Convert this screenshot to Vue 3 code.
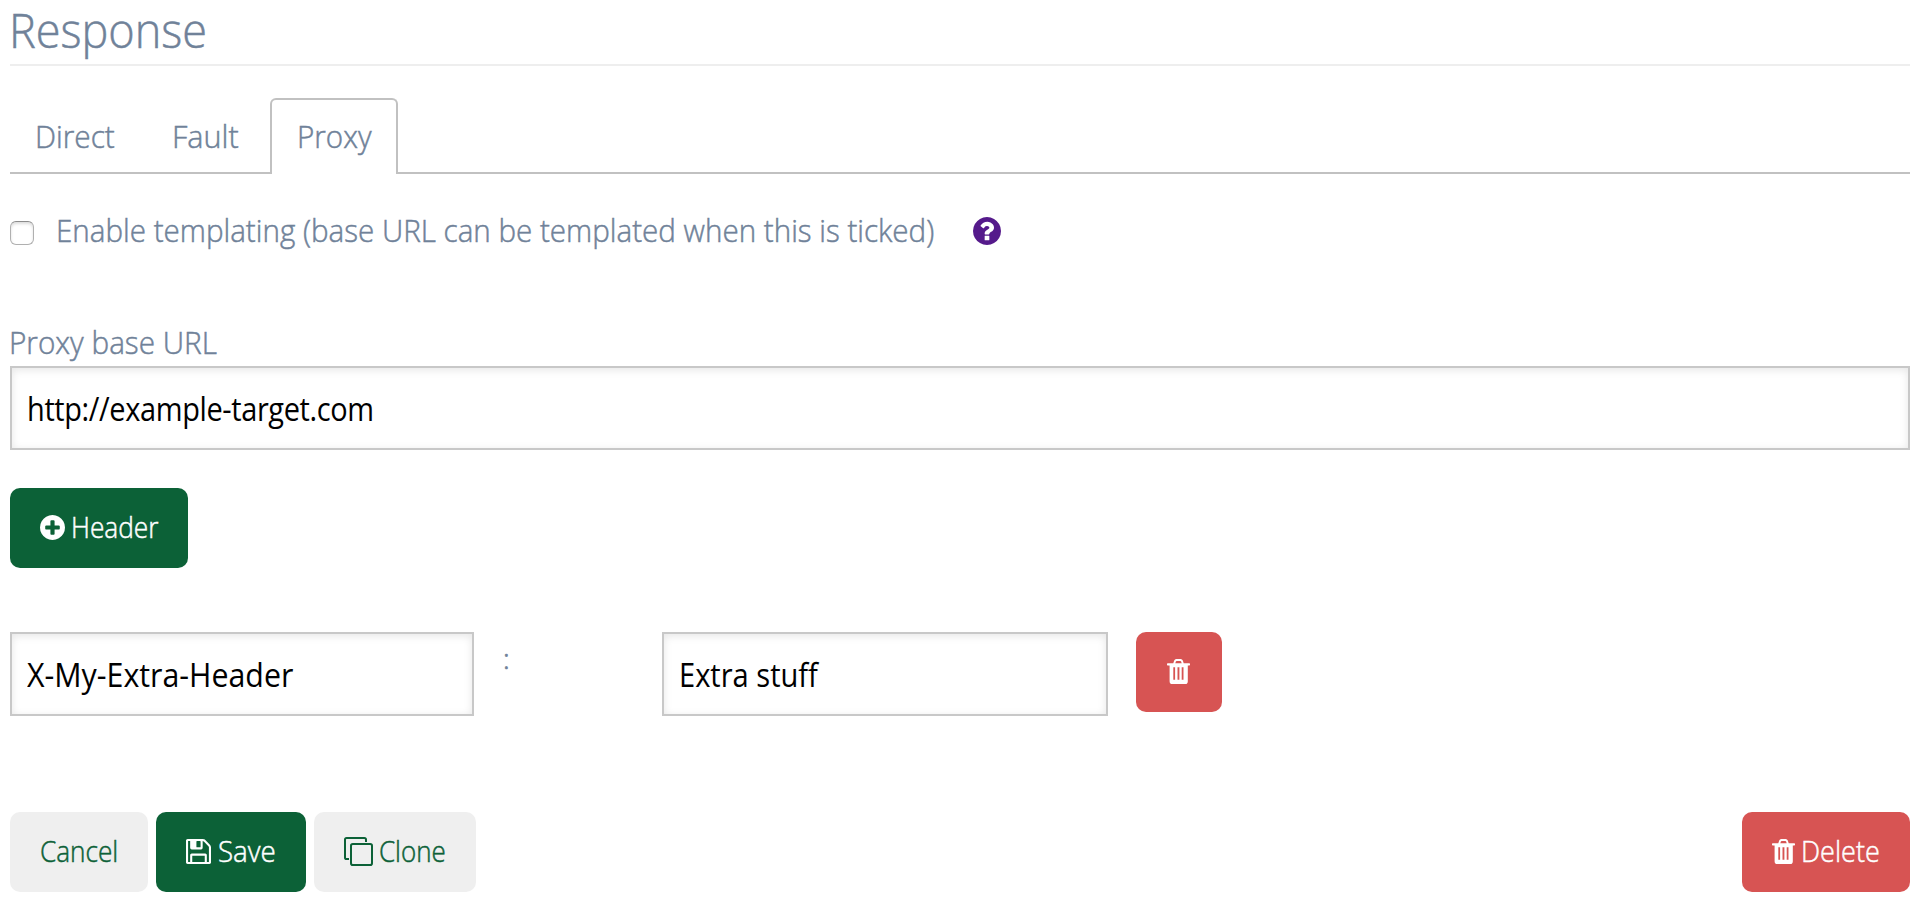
<script setup>
import { ref } from 'vue'

const tabs = [
  { name: 'Direct', cls: 'direct' },
  { name: 'Fault', cls: 'fault' },
  { name: 'Proxy', cls: 'proxy' },
]
const activeTab = ref('Proxy')
const templating = ref(false)
const baseUrl = ref('http://example-target.com')
const headers = ref([{ key: 'X-My-Extra-Header', value: 'Extra stuff' }])
</script>

<template>
  <main class="page">
    <h1><span>Response</span></h1>

    <nav class="tabs">
      <a v-for="t in tabs" :key="t.name" class="tab" :class="[t.cls, { active: activeTab === t.name }]" @click="activeTab = t.name"><span>{{ t.name }}</span></a>
    </nav>

    <div class="check-row">
      <label class="check">
        <input v-model="templating" type="checkbox" />
        <span>Enable templating (base URL can be templated when this is ticked)</span>
      </label>
      <svg class="help" viewBox="128 128 1536 1536"><path d="M1024 1376v-192q0-14-9-23t-23-9h-192q-14 0-23 9t-9 23v192q0 14 9 23t23 9h192q14 0 23-9t9-23zm256-672q0-88-55.500-163t-138.500-116-170-41q-243 0-371 213-15 24 8 42l132 100q7 6 19 6 16 0 25-12 53-68 86-92 34-24 86-24 48 0 85.500 26t37.500 59q0 38-20 61t-68 45q-63 28-115.500 86.500t-52.500 125.500v36q0 14 9 23t23 9h192q14 0 23-9t9-23q0-19 21.500-49.500t54.500-49.500q32-18 49-28.500t46-35 44.500-48 28-60.500 12.500-81zm384 192q0 209-103 385.500t-279.500 279.500-385.500 103-385.500-103-279.500-279.500-103-385.500 103-385.500 279.500-279.500 385.500-103 385.500 103 279.500 279.500 103 385.500z" /></svg>
    </div>

    <div class="lbl"><span>Proxy base URL</span></div>
    <div class="field url"><input v-model="baseUrl" type="text" /></div>

    <button class="btn green add" type="button">
      <svg class="plus" viewBox="128 128 1536 1536"><path d="M1344 960v-128q0-26-19-45t-45-19h-256v-256q0-26-19-45t-45-19h-128q-26 0-45 19t-19 45v256h-256q-26 0-45 19t-19 45v128q0 26 19 45t45 19h256v256q0 26 19 45t45 19h128q26 0 45-19t19-45v-256h256q26 0 45-19t19-45zm320-64q0 209-103 385.500t-279.500 279.500-385.500 103-385.500-103-279.500-279.500-103-385.500 103-385.500 279.500-279.500 385.500-103 385.500 103 279.500 279.500 103 385.500z" /></svg>
      <span>Header</span>
    </button>

    <div v-for="(h, i) in headers" :key="i" class="header-row">
      <div class="field key"><input v-model="h.key" type="text" /></div>
      <div class="colon">:</div>
      <div class="field value"><input v-model="h.value" type="text" /></div>
      <button class="btn red remove" type="button" aria-label="Remove header">
        <svg class="trash" viewBox="0 0 23 25"><path fill-rule="evenodd" d="M6.300 4.200 7.200 1.500Q7.800 0 9.200 0h4.600q1.400 0 2 1.500l.9 2.700h5.600q.7 0 .7.700v.9q0 .7-.7.700h-1.500v15.700q0 2.800-2.300 2.800H5Q2.600 25 2.600 22.200V6.500H.7Q0 6.500 0 5.800v-.9q0-.7.7-.7zM8.300 4.200h6.400l-.6-1.700q-.2-.6-.7-.6H9.600q-.5 0-.7.600zM6.300 8.300v12.500h1.800V8.300zm4.200 0v12.500h1.900V8.300zm4.200 0v12.500h1.800V8.300z" /></svg>
      </button>
    </div>

    <footer class="actions">
      <button class="btn grey cancel" type="button"><span>Cancel</span></button>
      <button class="btn green save" type="button">
        <svg class="floppy" viewBox="128 128 1536 1536"><path d="M512 1536h768v-384h-768v384zm896 0h128v-896q0-14-10-38.500t-20-34.500l-281-281q-10-10-34-20t-39-10v416q0 40-28 68t-68 28h-576q-40 0-68-28t-28-68v-416h-128v1280h128v-416q0-40 28-68t68-28h832q40 0 68 28t28 68v416zm-384-928v-320q0-13-9.500-22.500t-22.500-9.500h-192q-13 0-22.500 9.500t-9.500 22.500v320q0 13 9.500 22.500t22.500 9.500h192q13 0 22.500-9.500t9.500-22.500zm640 32v928q0 40-28 68t-68 28h-1344q-40 0-68-28t-28-68v-1344q0-40 28-68t68-28h928q40 0 88 20t76 48l280 280q28 28 48 76t20 88z" /></svg>
        <span>Save</span>
      </button>
      <button class="btn grey clone" type="button">
        <svg class="copy" viewBox="0 0 29 29"><rect x="7" y="7" width="21" height="21" rx="1.800" /><path d="M5 22H2.600Q1 22 1 20.400V2.600Q1 1 2.600 1h17.800Q22 1 22 2.600V5" /></svg>
        <span>Clone</span>
      </button>
      <button class="btn red delete" type="button">
        <svg class="trash" viewBox="0 0 23 25"><path fill-rule="evenodd" d="M6.300 4.200 7.200 1.500Q7.800 0 9.200 0h4.600q1.400 0 2 1.500l.9 2.700h5.600q.7 0 .7.700v.9q0 .7-.7.700h-1.500v15.700q0 2.800-2.300 2.800H5Q2.600 25 2.600 22.200V6.500H.7Q0 6.500 0 5.800v-.9q0-.7.7-.7zM8.300 4.200h6.400l-.6-1.700q-.2-.6-.7-.6H9.600q-.5 0-.7.600zM6.300 8.300v12.500h1.800V8.300zm4.200 0v12.500h1.900V8.300zm4.200 0v12.500h1.800V8.300z" /></svg>
        <span>Delete</span>
      </button>
    </footer>
  </main>
</template>

<style>
body {
  background: #fff;
}
</style>

<style scoped>
.page {
  box-sizing: border-box;
  height: 902px;
  padding: 0 12px 10px 10px;
  display: flex;
  flex-direction: column;
  font-family: "Open Sans", "Noto Sans", sans-serif;
  font-size: 32px;
  font-weight: 300;
  color: #708299;
  white-space: nowrap;
}
span {
  display: inline-block;
  transform: scaleX(var(--sx, 1));
  transform-origin: 0 50%;
  -webkit-text-stroke: .5px currentColor;
}
h1 {
  --sx: .938;
  box-sizing: border-box;
  height: 66px;
  margin: 0;
  border-bottom: 2px solid #eee;
  font-size: 48px;
  line-height: 60px;
  font-weight: 300;
}
h1 span,
.lbl span {
  margin-left: -1px;
}
.tabs {
  display: flex;
  box-sizing: border-box;
  height: 76px;
  margin-top: 32px;
  border-bottom: 2px solid #c1c1c1;
}
.tab {
  box-sizing: border-box;
  height: 76px;
  padding: 0 0 0 25px;
  border: 2px solid transparent;
  border-bottom: 0;
  line-height: 72px;
}
.tab.active {
  border-color: #c1c1c1;
  border-radius: 6px 6px 0 0;
  background: #fff;
}
.direct { --sx: .93; width: 134px; padding-left: 23px; }
.fault { --sx: .955; width: 126px; padding-left: 26px; }
.proxy { --sx: .925; width: 128px; }
.check-row {
  display: flex;
  align-items: center;
  height: 48px;
  margin-top: 32px;
}
.check {
  --sx: .924;
  display: flex;
  align-items: center;
  width: 963px;
  line-height: 48px;
}
.check input {
  appearance: none;
  flex: none;
  box-sizing: border-box;
  width: 24px;
  height: 24px;
  margin: 6px 22px 0 0;
  border: 1px solid #b0b0b0;
  border-top-color: #8c8c8c;
  border-radius: 6px;
  background: #fff;
  box-shadow: inset 0 2px 3px #ddd;
}
.help {
  width: 28px;
  height: 28px;
  margin-top: 1px;
  fill: #551a8b;
}
.lbl {
  --sx: .928;
  margin-top: 64px;
  height: 48px;
  line-height: 48px;
}
.field {
  box-sizing: border-box;
  height: 84px;
  padding: 0 14px;
  border: 2px solid #c8c8c8;
  background: #fff;
  box-shadow: inset 0 2px 8px rgba(0, 0, 0, .1);
  overflow: hidden;
}
.field input {
  display: block;
  width: 100%;
  height: 80px;
  padding: 0;
  border: 0;
  outline: 0;
  background: transparent;
  color: #000;
  font-family: inherit;
  font-size: 32px;
  font-weight: 400;
  transform: scaleX(var(--sx));
  transform-origin: 0 50%;
}
.url { --sx: .904; padding-left: 15px; }
.url input { letter-spacing: -.4px; }
.key { --sx: .948; width: 464px; padding-left: 15px; }
.value { --sx: .908; width: 446px; padding-left: 15px; }
.btn {
  display: flex;
  align-items: center;
  box-sizing: border-box;
  height: 80px;
  padding: 0 0 0 30px;
  border: 0;
  border-radius: 10px;
  font-family: inherit;
  font-size: 29.500px;
  font-weight: 300;
  white-space: nowrap;
}
.btn span {
  line-height: 78px;
  padding-bottom: 2px;
}
.green { background: #0c6137; color: #fff; }
.grey { background: #efefef; color: #0c6137; }
.red { background: #d75453; color: #fff; }
.btn svg { fill: currentColor; flex: none; }
.add { --sx: .89; width: 178px; margin-top: 38px; }
.plus { width: 25px; height: 25px; margin: -1px 6px 0 -.5px; }
.header-row {
  display: flex;
  height: 84px;
  margin-top: 64px;
}
.colon {
  width: 159px;
  margin: 1px 0 0 29px;
  font-size: 28px;
  line-height: 50px;
  -webkit-text-stroke: .7px currentColor;
}
.remove { width: 86px; margin-left: 28px; padding-left: 31px; }
.trash { width: 23px; height: 25px; margin-top: -1px; }
.actions {
  display: flex;
  margin-top: 96px;
}
.cancel { --sx: .887; width: 138px; }
.save { --sx: .94; width: 150px; margin-left: 8px; }
.floppy { width: 25px; height: 25px; margin: -1px 7px 0 0; }
.clone { --sx: .88; width: 162px; margin-left: 8px; }
.btn .copy { width: 29px; height: 29px; margin: -1px 6px 0 0; fill: none; stroke: currentColor; stroke-width: 2; }
.delete { --sx: .916; width: 168px; margin-left: auto; }
.delete .trash { margin-right: 6px; }
</style>
